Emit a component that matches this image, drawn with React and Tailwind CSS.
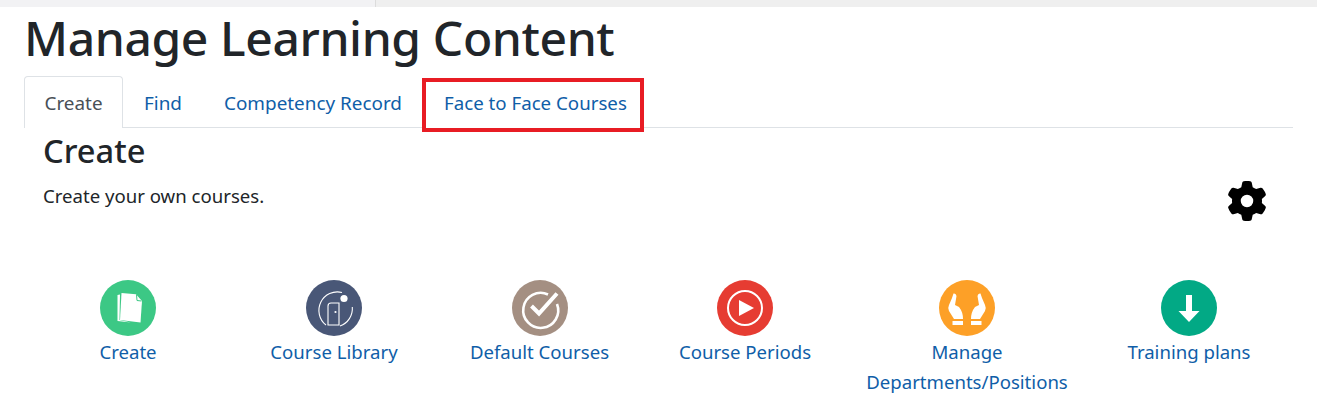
import { FaGear } from "react-icons/fa6";

const FileIcon = () => (
  <svg viewBox="0 0 56 56" className="w-14 h-14">
    <circle cx="28" cy="28" r="28" fill="#3cc885" />
    <path d="M17.5 15 L17.5 41 L31 42.5 L19.5 40 L20 14.5 Z" fill="#fff" />
    <path d="M21.5 13 L36 14.2 L42 21 L40.5 42.5 L20 40 Z" fill="#fff" />
    <path d="M36.5 14.5 L37 20.5 L41.5 21" fill="none" stroke="#3cc885" strokeWidth="1" />
  </svg>
);

const DoorIcon = () => (
  <svg viewBox="0 0 56 56" className="w-14 h-14">
    <circle cx="28" cy="28" r="28" fill="#495777" />
    <path d="M36 12.5 A18.5 18.5 0 0 0 20 45" fill="none" stroke="#fff" strokeWidth="1.1" />
    <path d="M46.3 27 A18.5 18.5 0 0 1 34 46" fill="none" stroke="#fff" strokeWidth="1.1" />
    <path d="M22 45 V26 Q22 23 25 23 H33 V45 Z" fill="none" stroke="#fff" strokeWidth="1.1" />
    <circle cx="29.5" cy="32" r="1.1" fill="#fff" />
    <circle cx="38" cy="18.5" r="3.6" fill="#fff" />
  </svg>
);

const CheckIcon = () => (
  <svg viewBox="0 0 56 56" className="w-14 h-14">
    <circle cx="28" cy="28" r="28" fill="#a48f82" />
    <path d="M36 14.5 A17.5 17.5 0 1 0 45 24" fill="none" stroke="#fff" strokeWidth="2.6" />
    <path d="M19.5 26 L27 33.5 L45 13.5" fill="none" stroke="#fff" strokeWidth="4" />
  </svg>
);

const PlayIcon = () => (
  <svg viewBox="0 0 56 56" className="w-14 h-14">
    <circle cx="28" cy="28" r="28" fill="#e63c32" />
    <circle cx="28" cy="28" r="17" fill="none" stroke="#fff" strokeWidth="2" />
    <path d="M22 20 L37 28 L22 36 Z" fill="#fff" />
  </svg>
);

const Hand = () => (
  <>
    <path d="M14.5 13.5 Q17 13 17.5 16 L16 25 L20 27 Q24 32 24 39 L15 39 L10 31 Q8.5 28 10 25 L13 18 Z" fill="#fff" />
    <path d="M13.5 41 H24 V45 H13.5 Z" fill="#fff" />
  </>
);

const HandsIcon = () => (
  <svg viewBox="0 0 56 56" className="w-14 h-14">
    <circle cx="28" cy="28" r="28" fill="#fda027" />
    <Hand />
    <g transform="matrix(-1 0 0 1 56 0)">
      <Hand />
    </g>
  </svg>
);

const DownIcon = () => (
  <svg viewBox="0 0 56 56" className="w-14 h-14">
    <circle cx="28" cy="28" r="28" fill="#02a985" />
    <path d="M25 15 H31 V31 H38.5 L28 42 L17.5 31 H25 Z" fill="#fff" />
  </svg>
);

const items = [
  { label: "Create", icon: <FileIcon />, width: "w-[206px]" },
  { label: "Course Library", icon: <DoorIcon />, width: "w-[206px]" },
  { label: "Default Courses", icon: <CheckIcon />, width: "w-[205px]" },
  { label: "Course Periods", icon: <PlayIcon />, width: "w-[206px]" },
  { label: "Manage Departments/Positions", icon: <HandsIcon />, width: "w-[238px]" },
  { label: "Training plans", icon: <DownIcon />, width: "w-[206px]" },
];

const App = () => {
  return (
    <div className="w-[1317px] h-[408px] overflow-hidden bg-white font-['Noto_Sans',sans-serif]">
      <div className="flex h-[7px]">
        <div className="w-[376px] bg-[#f2f2f4] border-r border-[#dcdcdc]" />
        <div className="flex-1 bg-[#efefef]" />
      </div>

      <div className="pl-[24px] w-[1293px]">
        <h1 className="text-[48px] leading-[58px] pt-[2px] tracking-[-0.4px] font-medium text-[#212529] h-[69px]">
          Manage Learning Content
        </h1>

        <div className="flex h-[52px] border-b border-[#dee2e6] text-[18.9px] text-[#0f5ea8]">
          <div className="w-[99px] h-[52px] pt-[2px] flex items-center justify-center bg-white border border-b-0 border-[#dee2e6] rounded-t text-[#495057]">
            Create
          </div>
          <div className="pl-[21px] pr-[21px] pt-[3px] flex items-center">Find</div>
          <div className="pl-[21px] pr-[20px] pt-[3px] flex items-center">Competency Record</div>
          <div className="mt-[2px] w-[222px] h-[54px] pb-[4px] pl-[18px] flex items-center border-[4px] border-[#e81c24] bg-white text-[18.7px]">
            Face to Face Courses
          </div>
        </div>

        <div className="flex justify-between pl-[19px] pr-[26px]">
          <div>
            <h2 className="text-[32.6px] leading-[46px] font-medium text-[#212529]">Create</h2>
            <p className="mt-[8px] text-[18.6px] leading-[27px] text-[#212529]">Create your own courses.</p>
          </div>
          <FaGear className="mt-[53px] w-[40px] h-[40px] text-black" />
        </div>

        <div className="flex mt-[59px] pl-[1px]">
          {items.map((item) => (
            <div key={item.label} className={`${item.width} flex flex-col items-center text-center`}>
              {item.icon}
              <div className="mt-px px-[18px] text-[18.6px] leading-[30px] text-[#0f5ea8]">{item.label}</div>
            </div>
          ))}
        </div>
      </div>
    </div>
  );
};

export default App;
